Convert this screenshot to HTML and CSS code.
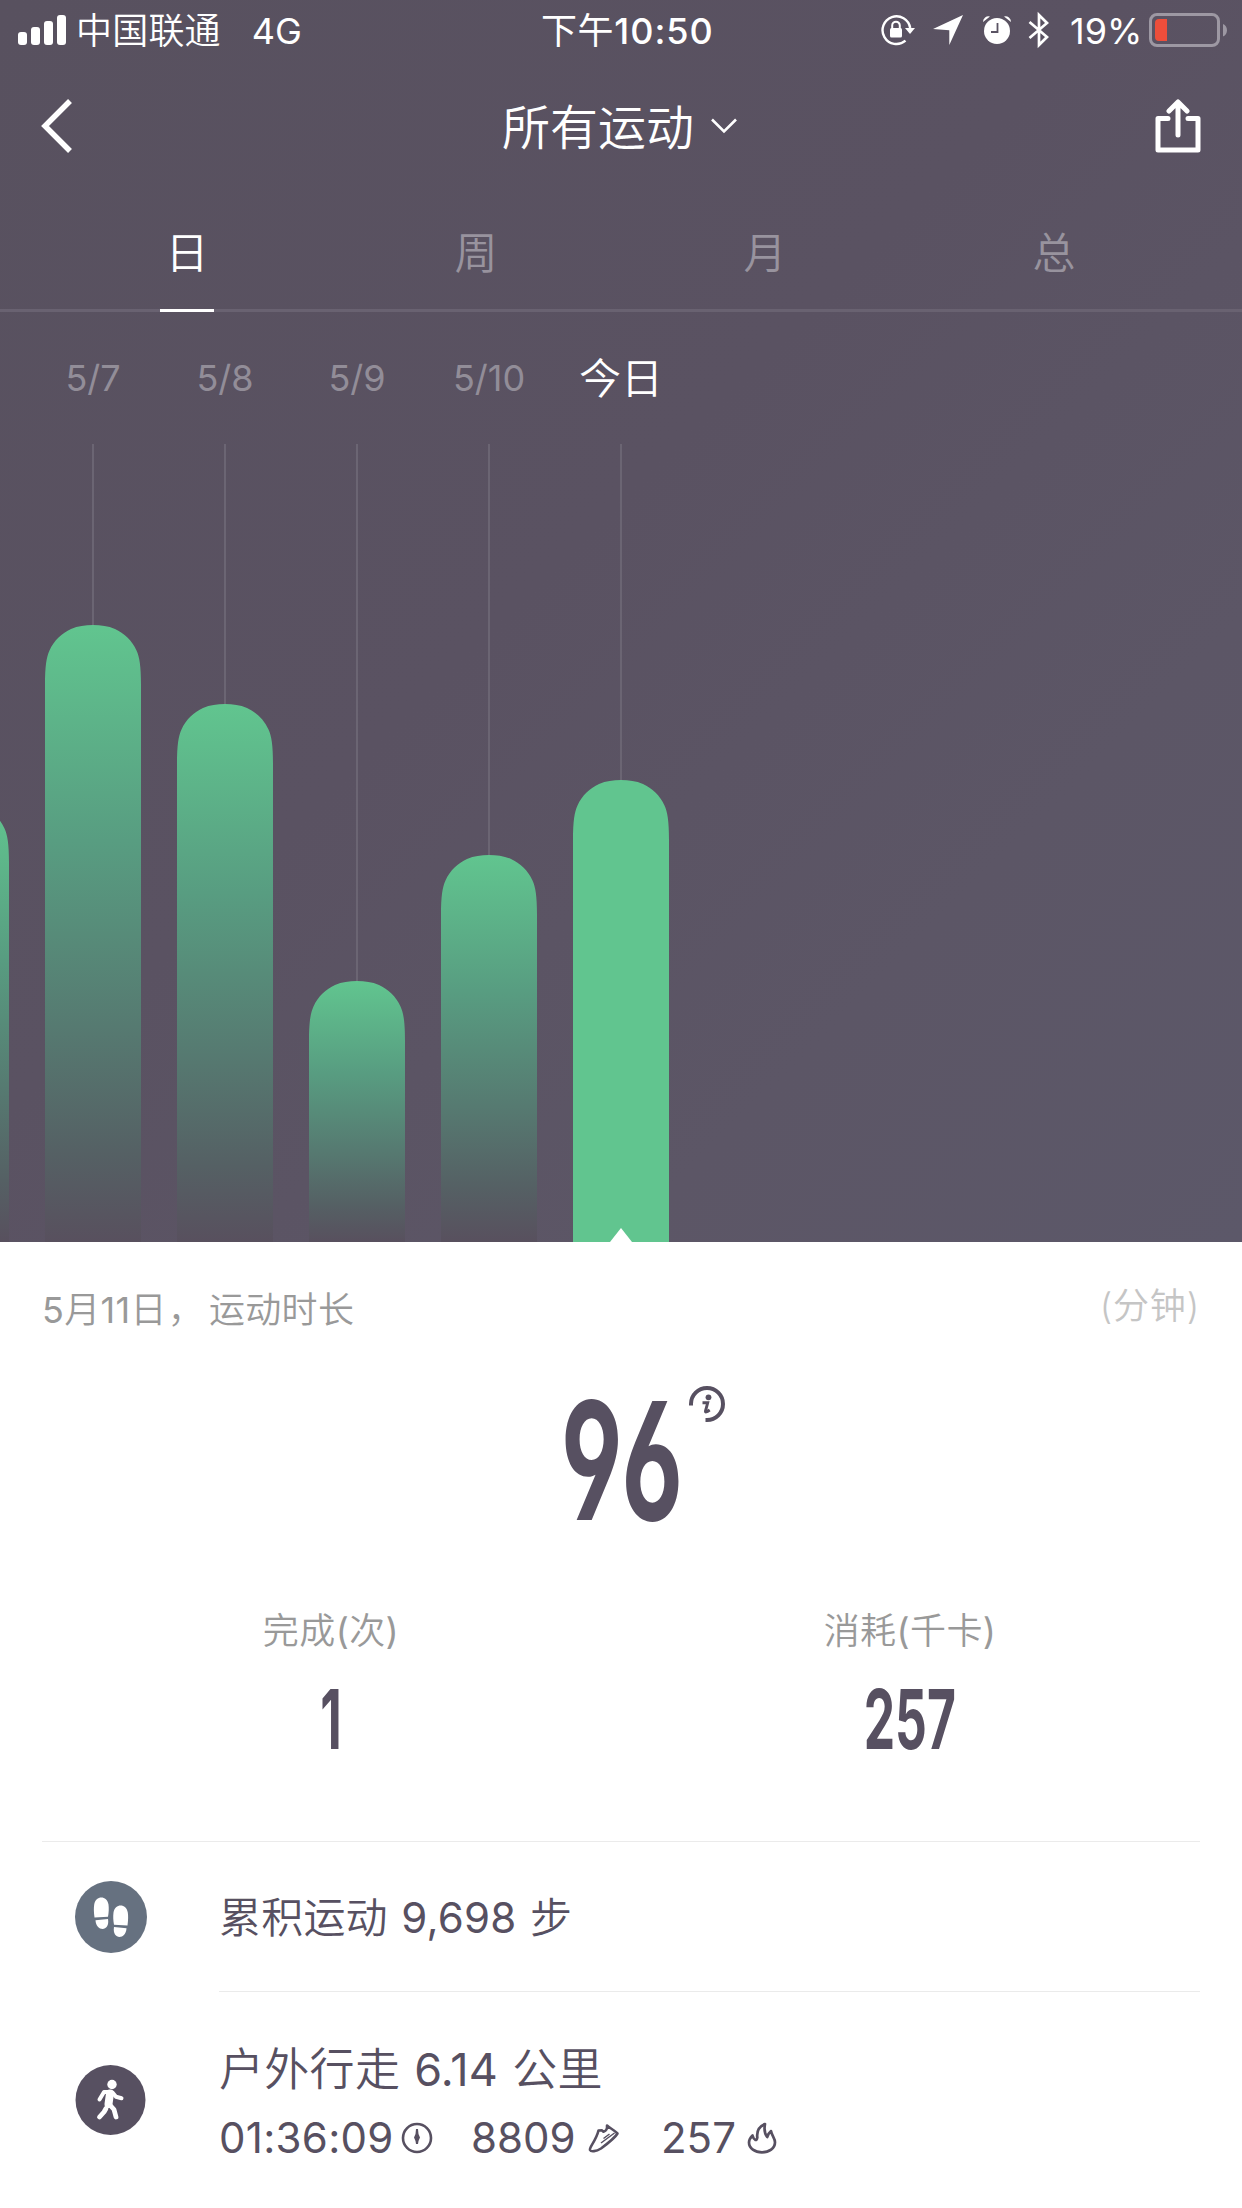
FILE: index.html
```html
<!DOCTYPE html>
<html lang="zh-CN">
<head>
<meta charset="utf-8">
<title>所有运动</title>
<link rel="stylesheet" href="styles.css">
</head>
<body>
<main class="screen">
  <section class="hero">
    <div class="status">
      <div class="status-left">
        <svg class="signal" width="48" height="30" viewBox="0 0 48 30" fill="#fff"><rect y="17" width="9" height="13" rx="3"/><rect x="13" y="12" width="9" height="18" rx="3"/><rect x="26" y="6" width="9" height="24" rx="3"/><rect x="39" width="9" height="30" rx="3"/></svg>
        <span class="carrier">中国联通</span>
        <span class="network">4G</span>
      </div>
      <div class="clock"><span>下午</span><span class="clock-digits">10:50</span></div>
      <div class="status-right">
        <svg class="i-lock" width="34" height="32" viewBox="0 0 34 32"><path d="M29.2 14A13.9 13.9 0 1 0 24.5 26.7" fill="none" stroke="#fff" stroke-width="2.4"/><path d="M24 14h10l-5 6z" fill="#fff"/><rect x="9" y="14" width="12" height="9.5" rx="1.5" fill="#fff"/><path d="M11.2 15v-3.5a3.8 3.8 0 0 1 7.6 0V15" fill="none" stroke="#fff" stroke-width="2"/></svg>
        <svg class="i-arrow" width="30" height="30" viewBox="0 0 30 30"><path d="M30 0L16.3 30V15.3L0 14z" fill="#fff"/></svg>
        <svg class="i-alarm" width="30" height="30" viewBox="0 0 30 30"><circle cx="15" cy="16" r="13" fill="#fff"/><path d="M1 7a5.5 5.5 0 0 1 7-5.500zM29 7a5.500 5.500 0 0 0-7-5.500z" fill="#fff"/><path d="M15.500 8v9H9" fill="none" stroke="#5a5363" stroke-width="1.800"/></svg>
        <svg class="i-bt" width="22" height="38" viewBox="0 0 22 38"><path d="M1.500 11L19 26l-8 8V4l8 8L1.500 27" fill="none" stroke="#fff" stroke-width="2.700"/></svg>
        <span class="percent">19%</span>
        <svg class="i-battery" width="78" height="34" viewBox="0 0 78 34"><rect x="1.500" y="1.500" width="68" height="31" rx="6.500" fill="none" stroke="#9d98a3" stroke-width="3"/><path d="M74 11c5.300 2 5.300 10.500 0 12.500z" fill="#9d98a3"/><path d="M18 6v22h-8a4 4 0 0 1-4-4V10a4 4 0 0 1 4-4z" fill="#ed4e3b"/></svg>
      </div>
    </div>

    <header class="navbar">
      <svg width="32" height="54" viewBox="0 0 32 54"><path d="M29 2L4 27l25 25" fill="none" stroke="#fff" stroke-width="5.500"/></svg>
      <h1 class="title"><span>所有运动</span><svg class="caret" width="26" height="16" viewBox="0 0 26 16"><path d="M1 1.500l12 12 12-12" fill="none" stroke="#fff" stroke-width="2.600"/></svg></h1>
      <svg width="46" height="54" viewBox="0 0 46 54" fill="none" stroke="#fff" stroke-width="5" stroke-linecap="round" stroke-linejoin="round"><path d="M13 19.500H3V51h40V19.500H33M23 36V4M14 12l9-9 9 9"/></svg>
    </header>

    <nav class="tabs">
      <span class="tab tab-active">日</span><span class="tab">周</span><span class="tab">月</span><span class="tab">总</span>
    </nav>

    <div class="chart">
      <div class="day"><span class="date"></span><i class="guide"></i><i class="bar" style="height:439px"></i></div>
      <div class="day"><span class="date">5/7</span><i class="guide"></i><i class="bar" style="height:617px"></i></div>
      <div class="day"><span class="date">5/8</span><i class="guide"></i><i class="bar" style="height:538px"></i></div>
      <div class="day"><span class="date">5/9</span><i class="guide"></i><i class="bar" style="height:261px"></i></div>
      <div class="day"><span class="date">5/10</span><i class="guide"></i><i class="bar" style="height:387px"></i></div>
      <div class="day"><span class="date date-today">今日</span><i class="guide"></i><i class="bar bar-today" style="height:462px"></i></div>
    </div>
  </section>

  <section class="summary">
    <div class="caption"><span class="caption-date"><b>5</b>月<b>11</b>日<span class="comma">，</span><span class="caption-kind">运动时长</span></span><span class="unit">(分钟)</span></div>
    <div class="total">
      <span class="din din-large">96</span>
      <svg class="info" width="36" height="36" viewBox="0 0 36 36"><path d="M2 19.500V18a16 16 0 1 1 16 16h-1.500" fill="none" stroke="#575061" stroke-width="4"/><circle cx="19.500" cy="11.300" r="2.900" fill="#575061"/><path d="M13.500 16.800h5.200l-2.200 8.200q-.6 2.400 4.200-1" fill="none" stroke="#575061" stroke-width="2.900"/></svg>
    </div>
    <div class="stats">
      <div class="stat"><span class="stat-label">完成<b>(</b>次<b>)</b></span><span class="din din-small">1</span></div>
      <div class="stat"><span class="stat-label">消耗<b>(</b>千卡<b>)</b></span><span class="din din-small">257</span></div>
    </div>
  </section>

  <section class="list">
    <div class="row row-steps">
      <svg class="badge" width="72" height="72" viewBox="0 0 72 72"><circle cx="36" cy="36" r="36" fill="#667180"/><g fill="#fff"><path d="M19.500 36.500c-.8-6-.8-9.500-.3-13 1.300-9.500 13-9.500 14.300 0 .5 4 .3 8-.5 12.300z"/><path d="M20.500 39.300l12.500-1.200c2.200 13-12 13-12.500 1.200z"/><path d="M39 43.800c-.8-4.500-1-8.500-.5-12.300 1.300-9.500 13-9.500 14.300 0 .5 3.500.5 7-.3 13z"/><path d="M39 46.100l12.500 1.200c-.5 11.800-14.700 11.800-12.500-1.200z"/></g></svg>
      <div class="row-body"><span class="steps">累积运动 <b>9,698</b> 步</span></div>
    </div>
    <div class="row row-walk">
      <svg class="badge" width="72" height="72" viewBox="0 0 72 72"><circle cx="35.500" cy="36" r="35" fill="#575061"/><circle cx="37" cy="20.500" r="4.700" fill="#fff"/><g fill="none" stroke="#fff" stroke-linecap="round" stroke-linejoin="round"><path d="M35 29.500L33.500 40" stroke-width="8"/><path d="M32.500 28H29L24.500 35.500M37.500 28.500l3.500 4.200 5.500 1.500" stroke-width="4"/><path d="M34 40l5 5.500 2 7.500M31 44.500l-2 3.500-4.500 5" stroke-width="4.800"/></g></svg>
      <div class="row-body">
        <span class="walk">户外行走 <b>6.14</b> 公里</span>
        <div class="metrics">
          <span class="duration">01:36:09</span>
          <svg class="i-time" width="32" height="32" viewBox="0 0 32 32"><circle cx="16" cy="16" r="14" fill="none" stroke="#575061" stroke-width="2.600"/><path d="M15 7h2l.5 5 1.500 3.500-1.500 3.500-.5 3h-2l-.5-3-1.500-3.500 1.500-3.500z" fill="#575061"/></svg>
          <span class="paces">8809</span>
          <svg class="i-shoe" width="32" height="30" viewBox="0 0 32 30"><path d="M19 2.500c2.500 2.500 6.500 4 10.500 8C27 15 19 21 13 25.500c-5 3-10 3.500-11 1.500C1 24 8 18 10.500 7.500l3.500-.2 1.500 1.500c2.500-.8 4-2.500 3.500-6.300z" fill="none" stroke="#575061" stroke-width="2.600" stroke-linejoin="round"/><path d="M13 20L26.500 10M15.500 15.500l6-4.500" fill="none" stroke="#575061" stroke-width="1.500"/></svg>
          <span class="kcal">257</span>
          <svg class="i-flame" width="30" height="32" viewBox="0 0 30 32"><path d="M5.500 13.500C3.500 15.500 2 17.500 2 20.500 2 26.500 8 30.300 15 30.300s13-3.800 13-10c0-4-3-6-4-11.300-2 1.500-3 3.500-3.800 6C17.500 11.500 17 7 18 2c-5 2-8.500 6.500-7.700 13.500-.3 2-1 2.500-1.800 2.500-2-1-2.500-2.500-3-4.500z" fill="none" stroke="#575061" stroke-width="2.700" stroke-linejoin="round"/></svg>
        </div>
      </div>
    </div>
  </section>
</main>
</body>
</html>
```
FILE: styles.css
```css
* { box-sizing: border-box; }
body {
  margin: 0;
  background: #fff;
  color: #575061;
  font-family: Inter, "Noto Sans CJK SC", sans-serif;
  font-weight: 350;
}
b { font-weight: 380; }
svg { display: block; flex: none; }
.screen { width: 1242px; height: 2208px; overflow: hidden; }

.hero {
  height: 1242px;
  overflow: hidden;
  background: linear-gradient(135deg, #58515f 0%, #5a5262 45%, #5c5666 75%, #5c5869 100%);
  color: #fff;
}

.status {
  display: grid;
  grid-template-columns: 541px 1fr 361px;
  align-items: center;
  height: 60px;
  font-size: 36px;
  line-height: 60px;
}
.status span { position: relative; top: 1px; }
.status-left, .status-right { display: flex; align-items: center; height: 60px; }
.status-left { padding-left: 18px; }
.carrier { margin-left: 10px; letter-spacing: .2px; }
.network { margin-left: 31px; font-weight: 380; }
.clock { display: flex; }
.clock span { font-weight: 400; letter-spacing: .6px; }
.clock .clock-digits { font-weight: 500; letter-spacing: 1px; }
.i-arrow { margin-left: 18px; }
.i-alarm { margin-left: 19px; }
.i-bt { margin-left: 16px; }
.percent { width: 68px; margin: 0 11px 0 20px; font-weight: 380; white-space: nowrap; }

.navbar {
  display: flex;
  align-items: center;
  justify-content: space-between;
  height: 132px;
  padding: 0 41px 0 41px;
}
.title {
  display: flex;
  align-items: center;
  gap: 17px;
  margin: 0 0 0 11px;
  font-size: 48px;
  font-weight: 350;
}
.title span { margin-top: -4px; }

.tabs {
  display: grid;
  grid-template-columns: repeat(4, 289px);
  justify-content: center;
  height: 120px;
  padding-right: 1px;
  border-bottom: 3px solid #696271;
}
.tab {
  justify-self: center;
  width: 54px;
  height: 120px;
  color: #98939e;
  font-size: 43px;
  line-height: 122px;
  text-align: center;
}
.tab-active { color: #fff; border-bottom: 3px solid #fff; }

.chart { display: flex; height: 930px; margin-left: -105px; }
.day { display: flex; flex: 0 0 132px; flex-direction: column; align-items: center; }
.date {
  height: 132px;
  color: #928d98;
  font-size: 36px;
  font-weight: 380;
  line-height: 133px;
}
.date-today { color: #fff; font-size: 42px; font-weight: 350; line-height: 134px; }
.guide { flex: 1; width: 2px; background: #6b6573; }
.bar {
  display: block;
  width: 96px;
  background: linear-gradient(#61c58f, #589d81 35%, #567a71 65%, #556064 86%, #58505e);
  clip-path: path("M0 700V60C0 41 1.500 32 4.500 25.500C9 15.500 17 8 26 4C33 1 40 0 48 0C56 0 63 1 70 4C79 8 87 15.500 91.500 25.500C94.500 32 96 41 96 60V700Z");
}
.bar-today { position: relative; background: #61c58f; }
.bar-today::after {
  content: "";
  position: absolute;
  left: 37px;
  bottom: 0;
  border: 11px solid transparent;
  border-top: 0;
  border-bottom: 14px solid #fff;
}

.summary { height: 599px; padding: 0 42px; }
.caption {
  display: flex;
  justify-content: space-between;
  height: 134px;
  color: #999;
  font-size: 36px;
  line-height: 136px;
}
.caption-date { letter-spacing: .3px; }
.comma { margin: 0 5px 0 1px; }
.unit { color: #c5c5c5; line-height: 128px; letter-spacing: .8px; }
.total {
  position: relative;
  display: flex;
  justify-content: center;
  height: 170px;
  align-items: center;
}
.din {
  font-weight: 700;
  font-feature-settings: "ss01", "cv03", "cv04";
  line-height: 1;
}
.din-large { margin-left: 2px; font-size: 164px; transform: scaleX(.61); }
.info { position: absolute; left: 647px; top: 10px; }
.stats { display: grid; grid-template-columns: 578px 580px; padding-top: 60px; }
.stat { display: flex; flex-direction: column; align-items: center; }
.stat-label { color: #999; font-size: 36px; line-height: 50px; letter-spacing: .4px; }
.din-small { margin-top: 22px; font-size: 83px; transform: scaleX(.6); }

.list { padding-left: 42px; }
.row { display: flex; }
.badge { margin-left: 33px; }
.row-steps { width: 1158px; height: 151px; border-top: 1px solid #ebebeb; }
.row-steps .badge { margin-top: 39px; }
.row-body { margin-left: 72px; }
.row-steps .row-body { width: 981px; border-bottom: 1px solid #ebebeb; }
.steps { font-size: 42px; line-height: 152px; letter-spacing: .2px; word-spacing: 1.5px; }
.row-walk { height: 216px; }
.row-walk .badge { margin-top: 72px; }
.walk { display: block; margin-top: 51px; font-size: 45px; line-height: 54px; letter-spacing: .3px; word-spacing: 1px; }
.metrics { display: flex; align-items: center; margin-top: 14px; font-size: 42px; font-weight: 380; line-height: 54px; }
.duration { width: 172px; letter-spacing: .3px; white-space: nowrap; }
.i-time { margin: 0 0 0 10px; }
.paces { width: 104px; margin-left: 38px; }
.i-shoe { margin-left: 13px; }
.kcal { width: 73px; margin-left: 41px; }
.i-flame { margin-left: 13px; }
```
